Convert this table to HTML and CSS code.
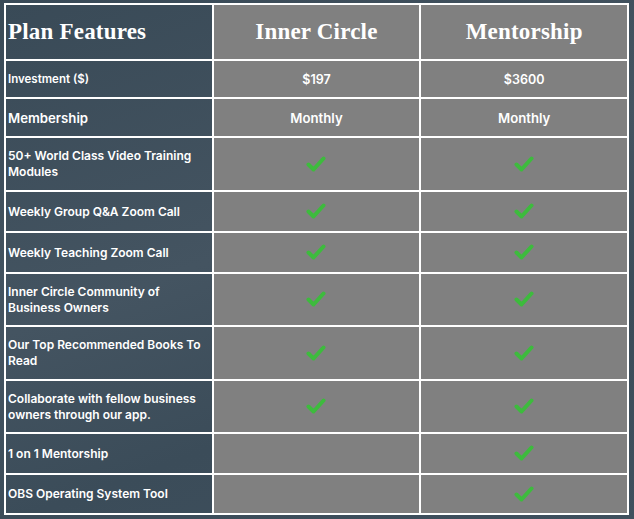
FILE: index.html
```html
<!DOCTYPE html>
<html lang="en">
<head>
<meta charset="utf-8">
<title>Plan Features</title>
<link rel="stylesheet" href="styles.css">
</head>
<body>
<div class="wrap">
<table class="plans">
  <colgroup><col><col><col></colgroup>
  <thead>
    <tr class="r-head">
      <th class="feat-head">Plan Features</th>
      <th>Inner Circle</th>
      <th>Mentorship</th>
    </tr>
  </thead>
  <tbody>
    <tr class="r-38">
      <td class="feat small">Investment ($)</td>
      <td class="val">$197</td>
      <td class="val">$3600</td>
    </tr>
    <tr class="r-39">
      <td class="feat big">Membership</td>
      <td class="val big">Monthly</td>
      <td class="val big">Monthly</td>
    </tr>
    <tr class="r-54">
      <td class="feat">50+ World Class Video Training Modules</td>
      <td class="val"><svg class="check" viewBox="0 0 20 16"><path d="M2.5 8.5 L7.5 13.5 L17.5 2.5"/></svg></td>
      <td class="val"><svg class="check" viewBox="0 0 20 16"><path d="M2.5 8.5 L7.5 13.5 L17.5 2.5"/></svg></td>
    </tr>
    <tr class="r-41">
      <td class="feat">Weekly Group Q&amp;A Zoom Call</td>
      <td class="val"><svg class="check" viewBox="0 0 20 16"><path d="M2.5 8.5 L7.5 13.5 L17.5 2.5"/></svg></td>
      <td class="val"><svg class="check" viewBox="0 0 20 16"><path d="M2.5 8.5 L7.5 13.5 L17.5 2.5"/></svg></td>
    </tr>
    <tr class="r-41">
      <td class="feat">Weekly Teaching Zoom Call</td>
      <td class="val"><svg class="check" viewBox="0 0 20 16"><path d="M2.5 8.5 L7.5 13.5 L17.5 2.5"/></svg></td>
      <td class="val"><svg class="check" viewBox="0 0 20 16"><path d="M2.5 8.5 L7.5 13.5 L17.5 2.5"/></svg></td>
    </tr>
    <tr class="r-53">
      <td class="feat">Inner Circle Community of Business Owners</td>
      <td class="val"><svg class="check" viewBox="0 0 20 16"><path d="M2.5 8.5 L7.5 13.5 L17.5 2.5"/></svg></td>
      <td class="val"><svg class="check" viewBox="0 0 20 16"><path d="M2.5 8.5 L7.5 13.5 L17.5 2.5"/></svg></td>
    </tr>
    <tr class="r-54">
      <td class="feat">Our Top Recommended Books To Read</td>
      <td class="val"><svg class="check" viewBox="0 0 20 16"><path d="M2.5 8.5 L7.5 13.5 L17.5 2.5"/></svg></td>
      <td class="val"><svg class="check" viewBox="0 0 20 16"><path d="M2.5 8.5 L7.5 13.5 L17.5 2.5"/></svg></td>
    </tr>
    <tr class="r-53">
      <td class="feat">Collaborate with fellow business owners through our app.</td>
      <td class="val"><svg class="check" viewBox="0 0 20 16"><path d="M2.5 8.5 L7.5 13.5 L17.5 2.5"/></svg></td>
      <td class="val"><svg class="check" viewBox="0 0 20 16"><path d="M2.5 8.5 L7.5 13.5 L17.5 2.5"/></svg></td>
    </tr>
    <tr class="r-41">
      <td class="feat">1 on 1 Mentorship</td>
      <td class="val"></td>
      <td class="val"><svg class="check" viewBox="0 0 20 16"><path d="M2.5 8.5 L7.5 13.5 L17.5 2.5"/></svg></td>
    </tr>
    <tr class="r-40">
      <td class="feat">OBS Operating System Tool</td>
      <td class="val"></td>
      <td class="val"><svg class="check" viewBox="0 0 20 16"><path d="M2.5 8.5 L7.5 13.5 L17.5 2.5"/></svg></td>
    </tr>
  </tbody>
</table>
</div>
</body>
</html>
```
FILE: styles.css
```css
html, body {
  margin: 0;
  padding: 0;
  height: 100%;
}
body {
  background: linear-gradient(160deg, #394a57 0%, #445461 45%, #3b4c59 70%, #3f505e 100%);
  font-family: "Inter", "Liberation Sans", sans-serif;
  color: #ffffff;
}
.wrap {
  padding: 3px 5px 0 4px;
}
.plans {
  width: 625px;
  table-layout: fixed;
  border-collapse: collapse;
  border: 2px solid #ffffff;
}
.plans th,
.plans td {
  border: 2px solid #ffffff;
  padding: 0 4px;
  vertical-align: middle;
}
.plans th {
  background: #808080;
  font-family: "Liberation Serif", "DejaVu Serif", serif;
  font-weight: 700;
  font-size: 23px;
  text-align: center;
  letter-spacing: 0.2px;
}
.plans th.feat-head {
  background: transparent;
  text-align: left;
  padding-left: 2px;
}
.plans td.feat {
  font-size: 12px;
  font-weight: 600;
  line-height: 16px;
  padding-left: 2px;
  padding-right: 4px;
}
.plans td.val {
  background: #808080;
  text-align: center;
  font-size: 12.5px;
  font-weight: 600;
}
.plans td.small {
  font-size: 11.5px;
}
.plans td.big {
  font-size: 13.2px;
}
.check {
  display: inline-block;
  width: 20px;
  height: 16px;
  vertical-align: middle;
  margin-top: -2px;
}
.check path {
  fill: none;
  stroke: #3dbb3d;
  stroke-width: 4;
  stroke-linecap: round;
  stroke-linejoin: round;
}
.r-head { height: 56px; }
.r-38 { height: 38px; }
.r-39 { height: 39px; }
.r-40 { height: 40px; }
.r-41 { height: 41px; }
.r-53 { height: 53px; }
.r-54 { height: 54px; }
```
